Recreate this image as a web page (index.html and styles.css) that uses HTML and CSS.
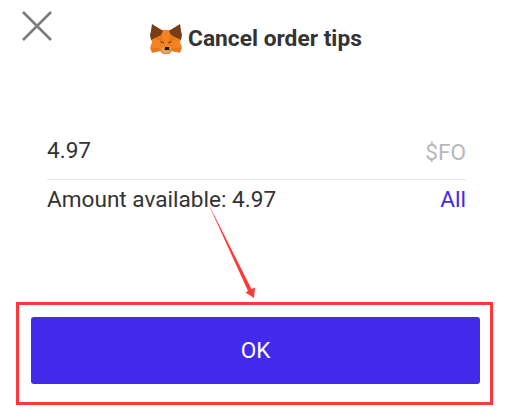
FILE: index.html
```html
<!DOCTYPE html>
<html lang="en">
<head>
<meta charset="utf-8">
<title>Cancel order tips</title>
<link rel="stylesheet" href="styles.css">
</head>
<body>
<main class="dialog">
  <header class="header">
    <svg class="close" viewBox="0 0 30 30"><path d="M1 1 29 29M29 1 1 29"/></svg>
    <svg class="fox" viewBox="0 0 32 30">
      <path fill="#f4831f" d="M2 1 12 6h8L30 1l1 14-1 3 2 6-2 5-8-2-3 3h-6l-3-3-8 2-2-5 2-6-1-3z"/>
      <path fill="#e8771c" d="m5 14 7-3 1 8zm22 0-7-3-1 8zM1 24l8 0 1 3-7 1zm30 0h-8l-1 3 7 1z"/>
      <path fill="#763d16" d="M2 0 13 7l-2 4-6 3-4 2-1-5 1-4zM30 0 19 7l2 4 6 3 4 2 1-5-1-4z"/>
      <path fill="#a04c18" d="m10 17 4 1v1.500l-3-.5zm12 0-4 1v1.500l3-.5z"/>
      <path fill="#d7a680" d="m12 24 3-1h3l3 1-1 3-2 2h-4l-2-2z"/>
      <path fill="#201c1a" d="m15 23h4l.5 3h-5z"/>
    </svg>
    <h1 class="title">Cancel order tips</h1>
  </header>
  <section class="form">
    <div class="row amount"><span>4.97</span><span class="unit">$FO</span></div>
    <div class="row available"><span>Amount available: 4.97</span><span class="all">All</span></div>
  </section>
  <div class="highlight"><button class="ok">OK</button></div>
  <svg class="arrow" viewBox="0 0 50 98"><path d="M1 0 45.500 88 49 86.500 48 97 39.500 91.500 42 90z"/></svg>
</main>
</body>
</html>
```
FILE: styles.css
```css
* { box-sizing: border-box; }
body { margin: 0; background: #fff; }
.dialog {
  position: relative;
  width: 512px;
  height: 417px;
  overflow: hidden;
  font: 22.6px/28px Roboto, sans-serif;
  color: #333;
}
.header { display: flex; align-items: flex-start; height: 128px; padding: 11px 0 0 22px; }
.close { width: 30px; height: 30px; fill: none; stroke: #7c7c7c; stroke-width: 2.7; }
.fox { width: 32px; height: 30px; margin: 13px 0 0 98px; }
.title { margin: 14px 0 0 6px; font-size: 22.75px; line-height: 28px; font-weight: 700; white-space: nowrap; }
.form { width: 419px; margin-left: 47px; }
.row { display: flex; justify-content: space-between; }
.amount { height: 52px; padding-top: 9px; border-bottom: 1px solid #e6e6e6; }
.unit { margin-top: 2px; color: #b8b8b8; }
.available { height: 122px; padding-top: 6px; }
.all { color: #422aeb; }
.highlight { width: 477px; height: 103px; margin-left: 16px; padding: 12px 10px 0 12px; border: 3px solid #ff3838; }
.ok { display: block; width: 449px; height: 67px; padding: 0; border: 0; border-radius: 3px; background: #422aeb; color: #fff; font: inherit; }
.arrow { position: absolute; left: 206px; top: 201px; width: 50px; height: 98px; overflow: visible; fill: #ff3838; }
```
